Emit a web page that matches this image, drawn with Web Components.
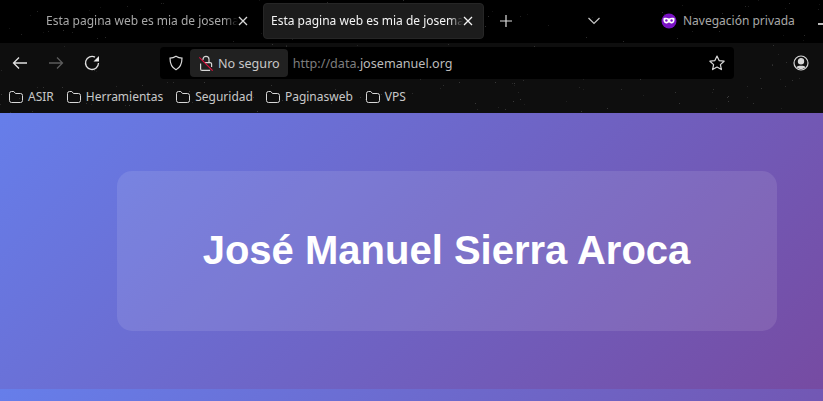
<!DOCTYPE html>
<html lang="en">
<head>
<meta charset="UTF-8">
<title>Esta pagina web es mia de josemanuel</title>
<style>
    html, body { margin: 0; height: 100%; overflow: hidden; background: #667eea; }
    body { font-family: "Noto Sans", sans-serif; display: flex; flex-direction: column; }
</style>
</head>
<body>

<browser-chrome>
    <browser-tab slot="tabs">Esta pagina web es mia de josemanuel</browser-tab>
    <browser-tab slot="tabs" selected>Esta pagina web es mia de josemanuel</browser-tab>
    <bookmark-item slot="bookmarks">ASIR</bookmark-item>
    <bookmark-item slot="bookmarks">Herramientas</bookmark-item>
    <bookmark-item slot="bookmarks">Seguridad</bookmark-item>
    <bookmark-item slot="bookmarks">Paginasweb</bookmark-item>
    <bookmark-item slot="bookmarks">VPS</bookmark-item>
</browser-chrome>
<hero-page>José Manuel Sierra Aroca</hero-page>

<script>
    customElements.define('browser-tab', class extends HTMLElement {
        constructor() {
            super();
            this.attachShadow({mode: 'open'}).innerHTML = `
                <style>
                    :host { display: flex; align-items: center; box-sizing: border-box; width: 221px; height: 36px;
                        padding: 0 10px 0 7px; font-size: 12px; color: #a8a8a8; border-radius: 4px; border: 1px solid transparent; }
                    :host([selected]) { background: #1c1c1c; color: #f4f4f4; border-color: #262626; }
                    .label { flex: 1; min-width: 0; white-space: nowrap; overflow: hidden;
                        -webkit-mask-image: linear-gradient(to right, #000 calc(100% - 14px), transparent);
                        mask-image: linear-gradient(to right, #000 calc(100% - 14px), transparent); }
                    svg { width: 10px; height: 10px; flex: none; color: #d8d8d8; }
                    :host([selected]) svg { color: #f4f4f4; }
                </style>
                <span class="label"><slot></slot></span>
                <svg viewBox="0 0 10 10" fill="none" stroke="currentColor" stroke-width="1.300"><path d="M1 1l8 8M9 1l-8 8"/></svg>`;
        }
    });

    customElements.define('bookmark-item', class extends HTMLElement {
        constructor() {
            super();
            this.attachShadow({mode: 'open'}).innerHTML = `
                <style>
                    :host { display: inline-flex; align-items: center; gap: 4px; font-size: 12px; color: #c8c8c8; }
                    svg { width: 16px; height: 16px; flex: none; }
                </style>
                <svg viewBox="0 0 16 16" fill="none" stroke="#d8d8d8" stroke-width="1"><path d="M1.500 4.500a2 2 0 0 1 2-2h2.300l1.700 2h5a2 2 0 0 1 2 2v5a2 2 0 0 1-2 2h-9a2 2 0 0 1-2-2z"/></svg>
                <slot></slot>`;
        }
    });

    // faint specks of the desktop theme behind the toolbars
    function stars() {
        let seed = 7, out = [];
        const next = () => (seed = (seed * 16807) % 2147483647) / 2147483647;
        for (let i = 0; i < 220; i++) {
            const x = Math.round(next() * 823), y = Math.round(next() * 113);
            const v = Math.round(18 + next() * 30);
            out.push(`${x}px ${y}px 0 0 rgb(${v},${v},${v})`);
        }
        return out.join(',');
    }

    customElements.define('browser-chrome', class extends HTMLElement {
        constructor() {
            super();
            this.attachShadow({mode: 'open'}).innerHTML = `
                <style>
                    :host { display: block; flex: none; height: 113px; color: #d8d8d8; background: #000;
                        position: relative; isolation: isolate; overflow: hidden; }
                    .stars { position: absolute; left: 0; top: 0; width: 1px; height: 1px; z-index: -1; box-shadow: ${stars()}; }
                    .tabs { display: flex; align-items: center; height: 43px; box-sizing: border-box; padding: 3px 0 5px 38px; gap: 4px; position: relative; }
                    .newtab { width: 14px; height: 14px; margin-left: 11px; flex: none; }
                    .chev { width: 14px; height: 10px; margin-left: 70px; flex: none; }
                    .private { display: flex; align-items: center; margin-left: 56px; font-size: 12px; color: #a8a8a8; gap: 6px; }
                    .private svg { width: 16px; height: 16px; }
                    .min { position: absolute; right: 0; top: 23px; width: 5px; height: 1.500px; background: #bbb; }
                    .nav { display: flex; align-items: center; height: 37px; box-sizing: border-box; background: rgba(255,255,255,.055); padding: 3px 0 0 12px; }
                    .nav > svg { width: 16px; height: 16px; flex: none; }
                    .urlbar { display: flex; align-items: center; box-sizing: border-box; width: 574px; height: 32px; margin-left: 60px;
                        background: #000; border-radius: 4px; font-size: 12.600px; padding: 0 9px 0 8px; }
                    .urlbar > svg { width: 16px; height: 16px; flex: none; }
                    .lock { display: flex; align-items: center; height: 28px; margin-left: 6px; padding: 0 8px 0 8px; gap: 4px; background: #212121;
                        border-radius: 4px; color: #c8c8c8; }
                    .url { margin-left: 5px; color: #7e7e7e; flex: 1; }
                    .url b { font-weight: 400; color: #bcbcbc; }
                    .bookmarks { display: flex; align-items: center; gap: 12px; height: 33px; box-sizing: border-box; background: rgba(255,255,255,.055); padding: 0 0 0 8px; }
                </style>
                <div class="stars"></div>
                <div class="tabs">
                    <slot name="tabs"></slot>
                    <svg class="newtab" viewBox="0 0 14 14" stroke="#ddd" stroke-width="1.200"><path d="M7 1v12M1 7h12"/></svg>
                    <svg class="chev" viewBox="0 0 14 10" fill="none" stroke="#c8c8c8" stroke-width="1.200"><path d="M1.500 2l5.500 5.500L12.500 2"/></svg>
                    <div class="private">
                        <svg viewBox="0 0 16 16"><circle cx="8" cy="8" r="7.500" fill="#7a12c4"/><path d="M2.500 5.300c1.600-.7 3.700-.6 5.500.2 1.800-.8 3.900-.9 5.500-.2.400 2.800-.7 5.200-2.700 5.200-1.300 0-1.900-1.100-2.800-1.100s-1.500 1.100-2.800 1.100c-2 0-3.100-2.400-2.700-5.200z" fill="#fff"/><circle cx="5.400" cy="7.500" r="1.200" fill="#7a12c4"/><circle cx="10.600" cy="7.500" r="1.200" fill="#7a12c4"/></svg>
                        <span>Navegación privada</span>
                    </div>
                    <div class="min"></div>
                </div>
                <div class="nav">
                    <svg viewBox="0 0 16 16" fill="none" stroke="#e0e0e0" stroke-width="1.300"><path d="M15 8H1.500M7 2.500 1.500 8 7 13.500"/></svg>
                    <svg style="margin-left:20px" viewBox="0 0 16 16" fill="none" stroke="#5c5c5c" stroke-width="1.300"><path d="M1 8h13.500M9 2.500 14.500 8 9 13.500"/></svg>
                    <svg style="margin-left:20px" viewBox="0 0 16 16" fill="none" stroke="#e0e0e0" stroke-width="1.300"><path d="M14.500 8A6.500 6.500 0 1 1 11 2.200"/><path d="M15 1v5.500H9.500z" fill="#e8e8e8" stroke="none"/></svg>
                    <div class="urlbar">
                        <svg viewBox="0 0 16 16" fill="none" stroke="#d8d8d8" stroke-width="1.200"><path d="M8 1.200c2 1.300 4 1.800 6 1.900 0 5.500-1.800 9.700-6 11.700-4.200-2-6-6.200-6-11.700 2-.1 4-.6 6-1.900z"/></svg>
                        <div class="lock">
                            <svg width="16" height="16" viewBox="0 0 16 16" fill="none" stroke="#d8d8d8" stroke-width="1.200"><path d="M2.600 8.500v5.400a1.500 1.500 0 0 0 1.500 1.500h8M13.600 12V9.100a1.500 1.500 0 0 0-1.500-1.500H7M5 5V4.300a3 3 0 0 1 6 0v3.300"/><path d="M1.300 2.300l13.400 13.400" stroke="#e0103f" stroke-width="1.100"/></svg>
                            <span>No seguro</span>
                        </div>
                        <div class="url">http://data.<b>josemanuel.org</b></div>
                        <svg viewBox="0 0 16 16" fill="none" stroke="#d8d8d8" stroke-width="1.200"><path d="M8 1l2.100 4.600 5 .6-3.700 3.400 1 5L8 12.100l-4.400 2.500 1-5L.9 6.200l5-.6z" stroke-linejoin="round"/></svg>
                    </div>
                    <svg style="margin-left:59px" viewBox="0 0 16 16" fill="none" stroke="#d8d8d8" stroke-width="1.200"><circle cx="8" cy="8" r="7"/><circle cx="8" cy="6.300" r="2.600" fill="#d8d8d8"/><path d="M3.500 12.200c1-1.800 8-1.800 9 0-2.300 2.400-6.700 2.400-9 0z" fill="#d8d8d8" stroke="none"/></svg>
                </div>
                <div class="bookmarks"><slot name="bookmarks"></slot></div>`;
        }
    });

    customElements.define('hero-page', class extends HTMLElement {
        constructor() {
            super();
            this.attachShadow({mode: 'open'}).innerHTML = `
                <style>
                    :host { display: block; flex: 1; min-height: 0; overflow: hidden;
                        background: linear-gradient(135deg, #667eea 0%, #764ba2 100%) 0 0 / 100% 276px repeat-y; }
                    .inner { box-sizing: border-box; height: 276px; padding: 58px 46px 58px 117px; }
                    .card { box-sizing: border-box; height: 160px; padding: 0 1px 1px 0; display: flex; align-items: center; justify-content: center;
                        background: rgba(255,255,255,.1); border-radius: 15px; }
                    h1 { margin: 0; font: 700 40px "Liberation Sans", Arial, sans-serif; color: #fff; }
                </style>
                <div class="inner"><div class="card"><h1><slot></slot></h1></div></div>`;
        }
    });
</script>

</body>
</html>
